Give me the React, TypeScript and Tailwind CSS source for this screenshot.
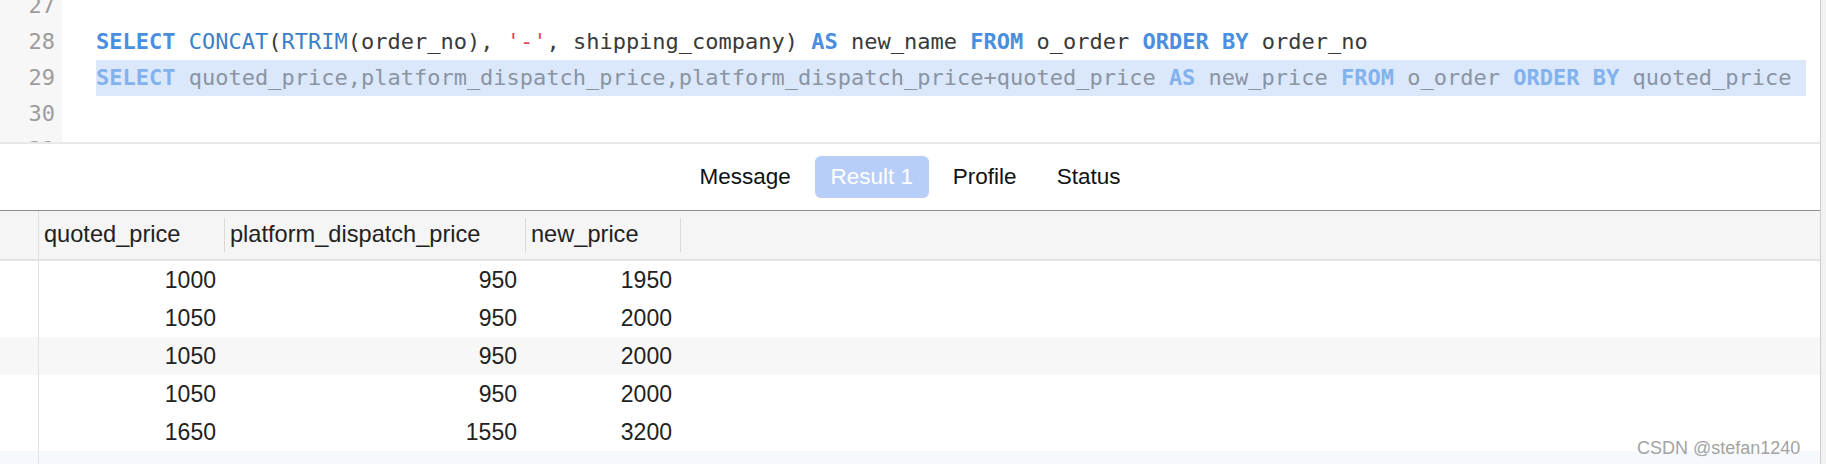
import React from "react";

const Kw = ({ children, faded }: { children: React.ReactNode; faded?: boolean }) => (
  <span className={faded ? "font-bold text-[#82b2ee]" : "font-bold text-[#4a8ee0]"}>{children}</span>
);
const Fn = ({ children }: { children: React.ReactNode }) => (
  <span className="text-[#3d7fc6]">{children}</span>
);

const rows = [
  ["1000", "950", "1950"],
  ["1050", "950", "2000"],
  ["1050", "950", "2000"],
  ["1050", "950", "2000"],
  ["1650", "1550", "3200"],
];

export default function App() {
  return (
    <div className="relative flex h-[464px] w-[1826px] overflow-hidden bg-white">
      <div className="flex min-w-0 flex-1 flex-col">
        {/* Editor */}
        <div className="flex h-[144px] shrink-0 overflow-hidden border-b-2 border-[#e8e8e8] font-['DejaVu_Sans_Mono',monospace] text-[22px]">
          <div className="w-[62px] shrink-0 bg-[#f7f7f7] pr-[7px] text-right text-[#9c9c9c]">
            <div className="mt-[-12px]">
              {["27", "28", "29", "30", "31"].map((n) => (
                <div key={n} className="h-[36px] leading-[36px]">
                  {n}
                </div>
              ))}
            </div>
          </div>
          <div className="min-w-0 flex-1">
            <div className="mt-[-12px]">
              <div className="h-[36px]" />
              <div className="ml-[34px] h-[36px] whitespace-pre leading-[36px] text-[#3a3a3a]">
                <Kw>SELECT</Kw> <Fn>CONCAT</Fn>(<Fn>RTRIM</Fn>(order_no), <span className="text-[#e0475b]">'-'</span>, shipping_company) <Kw>AS</Kw> new_name <Kw>FROM</Kw> o_order <Kw>ORDER BY</Kw> order_no
              </div>
              <div className="ml-[34px] h-[36px] w-[1710px] whitespace-pre bg-[#dbe8fb] leading-[36px] text-[#8a94a2]">
                <Kw faded>SELECT</Kw> quoted_price,platform_dispatch_price,platform_dispatch_price+quoted_price <Kw faded>AS</Kw> new_price <Kw faded>FROM</Kw> o_order <Kw faded>ORDER BY</Kw> quoted_price
              </div>
              <div className="h-[36px]" />
            </div>
          </div>
        </div>

        {/* Tabs */}
        <div className="flex h-[67px] shrink-0 items-center justify-center gap-2 border-b border-[#8e8e8e] font-['Liberation_Sans',Arial,sans-serif] text-[22.5px] text-[#111]">
          <div className="flex h-[42px] items-center px-4">Message</div>
          <div className="flex h-[42px] w-[114px] items-center justify-center rounded-[6px] bg-[#b6cef8] text-white">Result 1</div>
          <div className="flex h-[42px] items-center px-4">Profile</div>
          <div className="flex h-[42px] items-center px-4">Status</div>
        </div>

        {/* Grid */}
        <div className="flex min-h-0 flex-1 flex-col font-['Liberation_Sans',Arial,sans-serif] text-[23px] text-[#222]">
          <div className="flex h-[50px] shrink-0 border-b-2 border-[#e3e3e3] bg-[#f5f5f5] text-[23.6px]">
            <div className="w-[39px] shrink-0 border-r border-[#e0e0e0]" />
            <div className="flex w-[186px] shrink-0 items-center justify-between pl-[5px]">
              <span>quoted_price</span>
              <span className="h-[34px] w-px bg-[#dadada]" />
            </div>
            <div className="flex w-[301px] shrink-0 items-center justify-between pl-[5px]">
              <span>platform_dispatch_price</span>
              <span className="h-[34px] w-px bg-[#dadada]" />
            </div>
            <div className="flex w-[155px] shrink-0 items-center justify-between pl-[5px]">
              <span>new_price</span>
              <span className="h-[34px] w-px bg-[#dadada]" />
            </div>
          </div>
          {rows.map((r, i) => (
            <div key={i} className={`flex h-[38px] shrink-0 items-center ${i === 2 ? "bg-[#f7f7f7]" : "bg-white"}`}>
              <div className="h-full w-[39px] shrink-0 border-r border-[#e3e3e3]" />
              <div className="w-[186px] shrink-0 pr-[9px] text-right">{r[0]}</div>
              <div className="w-[301px] shrink-0 pr-[9px] text-right">{r[1]}</div>
              <div className="w-[155px] shrink-0 pr-[9px] text-right">{r[2]}</div>
            </div>
          ))}
          <div className="flex flex-1 bg-[#f5f8fd]">
            <div className="w-[39px] shrink-0 border-r border-[#e3e3e3]" />
          </div>
        </div>
      </div>
      <div className="w-[6px] shrink-0 border-l border-[#cdcdcd] bg-[#f2f2f2]" />

      <div className="absolute left-[1637px] top-[437px] font-['Liberation_Sans',Arial,sans-serif] text-[18px] leading-[22px] text-[#a3a3a3]">
        CSDN @stefan1240
      </div>
    </div>
  );
}
